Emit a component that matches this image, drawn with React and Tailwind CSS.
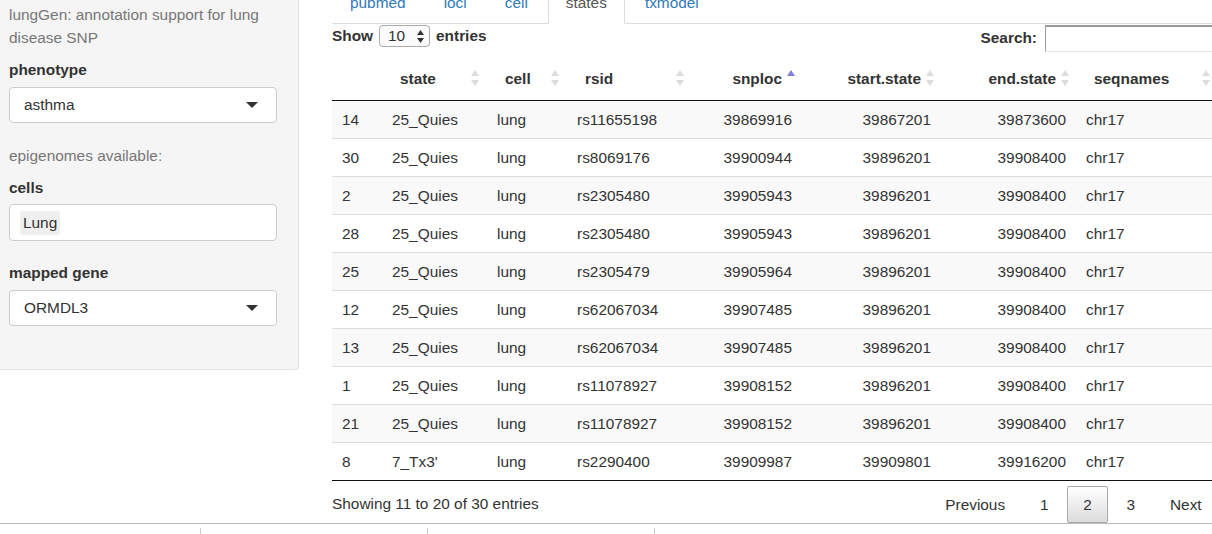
import React from 'react'

const columns = [
  { label: '', w: 'w-[50px]', align: 'left' },
  { label: 'state', w: 'w-[105px]', align: 'left' },
  { label: 'cell', w: 'w-[80px]', align: 'left' },
  { label: 'rsid', w: 'w-[125px]', align: 'left' },
  { label: 'snploc', w: 'w-[110px]', align: 'right', active: true },
  { label: 'start.state', w: 'w-[139px]', align: 'right' },
  { label: 'end.state', w: 'w-[135px]', align: 'right' },
  { label: 'seqnames', w: 'w-[142px]', align: 'left' },
]

const rows = [
  ['14', '25_Quies', 'lung', 'rs11655198', '39869916', '39867201', '39873600', 'chr17'],
  ['30', '25_Quies', 'lung', 'rs8069176', '39900944', '39896201', '39908400', 'chr17'],
  ['2', '25_Quies', 'lung', 'rs2305480', '39905943', '39896201', '39908400', 'chr17'],
  ['28', '25_Quies', 'lung', 'rs2305480', '39905943', '39896201', '39908400', 'chr17'],
  ['25', '25_Quies', 'lung', 'rs2305479', '39905964', '39896201', '39908400', 'chr17'],
  ['12', '25_Quies', 'lung', 'rs62067034', '39907485', '39896201', '39908400', 'chr17'],
  ['13', '25_Quies', 'lung', 'rs62067034', '39907485', '39896201', '39908400', 'chr17'],
  ['1', '25_Quies', 'lung', 'rs11078927', '39908152', '39896201', '39908400', 'chr17'],
  ['21', '25_Quies', 'lung', 'rs11078927', '39908152', '39896201', '39908400', 'chr17'],
  ['8', "7_Tx3'", 'lung', 'rs2290400', '39909987', '39909801', '39916200', 'chr17'],
]

const tabs = ['pubmed', 'loci', 'cell', 'states', 'txmodel']

function SortIcon({ active }) {
  return (
    <svg width="8" height="16" viewBox="0 0 8 16" className="shrink-0 -mt-[2px]">
      <polygon points="4,0 8,6 0,6" fill={active ? '#7f7fdc' : '#dcdcdc'} />
      {!active && <polygon points="0,10 8,10 4,16" fill="#dcdcdc" />}
    </svg>
  )
}

function Caret() {
  return (
    <svg width="12" height="6" viewBox="0 0 12 6">
      <polygon points="0,0 12,0 6,6" fill="#333" />
    </svg>
  )
}

function SelectBox({ value }) {
  return (
    <div className="h-[36px] bg-white border border-[#cccccc] rounded-[4px] flex items-center justify-between pl-[14px] pr-[18px] text-[#333]">
      <span>{value}</span>
      <Caret />
    </div>
  )
}

function Sidebar() {
  return (
    <div className="w-[299px] h-[370px] shrink-0 bg-[#f5f5f5] border-r border-b border-[#e3e3e3] rounded-br-[4px] pl-[9px] pr-[21px] pt-[3px]">
      <p className="text-[#777] leading-[23px]">lungGen: annotation support for lung disease SNP</p>
      <div className="mt-[10px] font-bold text-[#333]">phenotype</div>
      <div className="mt-[6px]">
        <SelectBox value="asthma" />
      </div>
      <p className="mt-[22px] text-[#777]">epigenomes available:</p>
      <div className="mt-[10px] font-bold text-[#333]">cells</div>
      <div className="mt-[5px] h-[37px] bg-white border border-[#cccccc] rounded-[4px] flex items-center pl-[10px]">
        <span className="bg-[#efefef] rounded-[3px] px-[3px] h-[24px] leading-[24px] text-[#333]">Lung</span>
      </div>
      <div className="mt-[21px] font-bold text-[#333]">mapped gene</div>
      <div className="mt-[6px]">
        <SelectBox value="ORMDL3" />
      </div>
    </div>
  )
}

function Tabs() {
  return (
    <ul className="flex -mt-[19px] border-b border-[#dddddd]">
      {tabs.map((t) => (
        <li key={t} className="mr-[2px] -mb-[1px]">
          {t === 'states' ? (
            <div className="h-[43px] leading-[41px] px-[17px] border border-[#dddddd] border-b-white bg-white rounded-t-[4px] text-[#555]">
              {t}
            </div>
          ) : (
            <div className="h-[43px] leading-[41px] px-[17px] border border-transparent text-[#337ab7]">{t}</div>
          )}
        </li>
      ))}
    </ul>
  )
}

function Controls() {
  return (
    <div className="h-[28px] flex justify-between items-start">
      <div className="mt-[1px] h-[22px] flex items-center font-bold text-[#333]">
        <span>Show</span>
        <div className="mx-[6px] w-[51px] h-[22px] border border-[#aaaaaa] rounded-[4px] bg-[#fbfbfb] flex items-center justify-between pl-[8px] pr-[5px] font-normal">
          <span>10</span>
          <svg width="7" height="13" viewBox="0 0 7 13">
            <polygon points="3.5,0 7,5 0,5" fill="#333" />
            <polygon points="0,8 7,8 3.5,13" fill="#333" />
          </svg>
        </div>
        <span>entries</span>
      </div>
      <div className="flex items-center h-[28px] font-bold text-[#333]">
        <span className="mr-[8px]">Search:</span>
        <div className="w-[173px] h-[27px] bg-white border border-[#c8c8c8] border-t-2 border-t-[#999] border-l-[#a0a0a0] border-b-[#e8e8e8]" />
      </div>
    </div>
  )
}

function DataTable() {
  return (
    <table className="mt-[6px] w-[886px] table-fixed border-separate border-spacing-0 text-[#333]">
      <thead>
        <tr>
          {columns.map((c, i) => (
            <th key={i} className={`${c.w} h-[43px] p-0 border-b border-[#111] font-bold`}>
              {c.label &&
                (c.align === 'right' ? (
                  <div className="flex items-center justify-end gap-[5px] pr-[7px]">
                    <span>{c.label}</span>
                    <SortIcon active={c.active} />
                  </div>
                ) : (
                  <div className="flex items-center justify-between pl-[18px] pr-[8px]">
                    <span>{c.label}</span>
                    <SortIcon />
                  </div>
                ))}
            </th>
          ))}
        </tr>
      </thead>
      <tbody>
        {rows.map((r, ri) => (
          <tr key={ri} className={ri % 2 === 0 ? 'bg-[#f9f9f9]' : 'bg-white'}>
            {r.map((v, ci) => (
              <td
                key={ci}
                className={`h-[38px] py-0 border-b ${ri === rows.length - 1 ? 'border-[#111]' : 'border-[#dddddd]'} ${
                  columns[ci].align === 'right' ? 'text-right pr-[10px]' : 'text-left pl-[10px]'
                }`}
              >
                {v}
              </td>
            ))}
          </tr>
        ))}
      </tbody>
    </table>
  )
}

function Footer() {
  const pages = ['Previous', '1', '2', '3', 'Next']
  return (
    <div className="pt-[5px] flex justify-between items-center text-[#333]">
      <span className="-mt-[2px]">Showing 11 to 20 of 30 entries</span>
      <div className="flex">
        {pages.map((p) =>
          p === '2' ? (
            <div
              key={p}
              className="ml-[2px] h-[37px] leading-[35px] px-[15.4px] border border-[#a8a8a8] rounded-[2px] bg-linear-to-b from-white to-[#dcdcdc]"
            >
              {p}
            </div>
          ) : (
            <div key={p} className="ml-[2px] h-[37px] leading-[35px] px-[15.4px] border border-transparent">
              {p}
            </div>
          )
        )}
      </div>
    </div>
  )
}

export default function App() {
  return (
    <div className="w-[1212px] h-[534px] overflow-hidden bg-white text-[15.4px] leading-[22px] font-['Liberation_Sans',Arial,sans-serif]">
      <div className="flex gap-[33px] items-start">
        <Sidebar />
        <div className="w-[886px] shrink-0">
          <Tabs />
          <Controls />
          <DataTable />
          <Footer />
        </div>
      </div>
      <div className="border-t border-[#bbbbbb] flex pl-[200px] pt-[4px]">
        <div className="w-[227px] h-[6px] border-l border-[#cccccc]" />
        <div className="w-[227px] h-[6px] border-l border-[#cccccc]" />
        <div className="w-[227px] h-[6px] border-l border-[#cccccc]" />
      </div>
    </div>
  )
}
